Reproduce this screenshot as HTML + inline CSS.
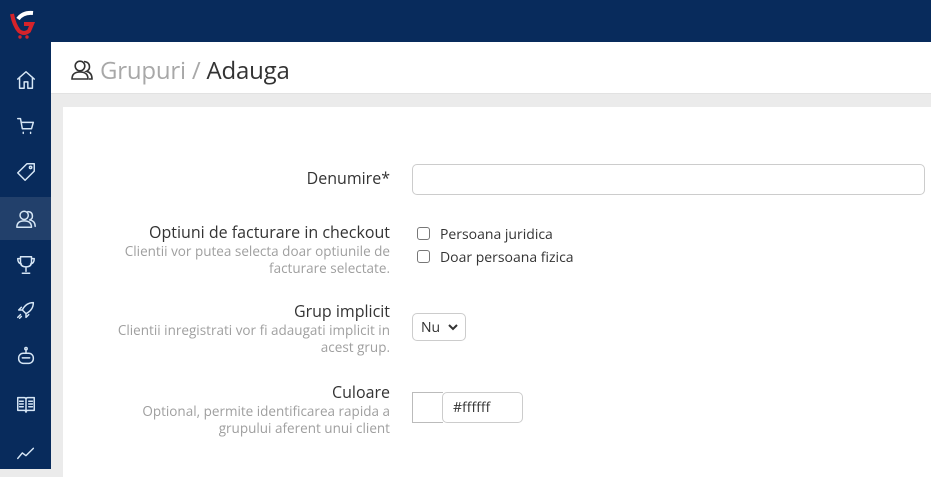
<!DOCTYPE html>
<html><head><meta charset="utf-8"><style>
*{box-sizing:border-box;margin:0;padding:0}
body{width:931px;height:469px;overflow:hidden;background:#ebebeb;font-family:"Open Sans","Liberation Sans",sans-serif;position:relative}
#top{position:absolute;left:0;top:0;width:931px;height:42px;background:#082b5c}
#side{position:absolute;left:0;top:0;width:51px;height:469px;background:#082b5c}
.ic{position:absolute;left:0;width:51px;height:43px;display:flex;align-items:center;justify-content:center}
.ic svg{width:22px;height:22px;fill:none;stroke:#d6e6f5;stroke-width:1.6;stroke-linecap:round;stroke-linejoin:round}
.act{background:#22406b}
#hdr{position:absolute;left:51px;top:42px;width:880px;height:52px;background:#fff;border-bottom:1px solid #e2e2e2}
#hdr .t{position:absolute;left:49px;top:12px;font-size:24px;color:#333;letter-spacing:-.2px}
#hdr .t span{color:#a8a8a8}
#panel{position:absolute;left:63px;top:107px;width:868px;height:370px;background:#fff}
.lbl{position:absolute;right:541px;text-align:right;font-size:16px;color:#333}
.sub{position:absolute;right:541px;text-align:right;font-size:13.5px;color:#9f9f9f;line-height:17px}
input,.box{position:absolute;border:1px solid #ccc;border-radius:5px;background:#fff}
.cb{position:absolute;width:13px;height:13px;border:1px solid #777;border-radius:3px;left:417px}
.ct{position:absolute;left:440px;font-size:14px;color:#333}
</style></head><body>
<div id="top"></div>
<div id="side">
<svg style="position:absolute;left:9px;top:9px" width="30" height="32" viewBox="0 0 30 32"><path d="M3 5 Q5 16 10 22 Q15 26 20 22 L23 15 L15 15" fill="none" stroke="#d6232a" stroke-width="4"/><path d="M9 10 Q14 3 24 4" fill="none" stroke="#fff" stroke-width="4"/><circle cx="11" cy="28" r="1.7" fill="#d6232a"/><circle cx="18" cy="28" r="1.7" fill="#d6232a"/></svg>
<div class="ic" style="top:58px"><svg viewBox="0 0 24 24"><path d="M3 11 L12 3 L21 11 M5 9 V21 H10 V14 H14 V21 H19 V9"/></svg></div>
<div class="ic" style="top:104px"><svg viewBox="0 0 24 24"><path d="M3 4 H6 L8 15 H18 L20 8 H7 M9 19 v1 M17 19 v1"/></svg></div>
<div class="ic" style="top:150px"><svg viewBox="0 0 24 24"><path d="M13 3 H21 V11 L11 21 L3 13 Z"/><circle cx="17" cy="7" r="1.3"/></svg></div>
<div class="ic act" style="top:197px"><svg viewBox="0 0 24 24"><circle cx="10" cy="8" r="4.5"/><path d="M2 21 Q2 14 10 14 Q18 14 18 21 Z M14 4 Q19 4 19 9 Q19 12 16 13 Q22 14 22 20"/></svg></div>
<div class="ic" style="top:243px"><svg viewBox="0 0 24 24"><path d="M6 3 H18 V9 Q18 14 12 14 Q6 14 6 9 Z M6 5 H3 Q3 10 7 11 M18 5 H21 Q21 10 17 11 M12 14 V19 M8 21 H16"/></svg></div>
<div class="ic" style="top:288px"><svg viewBox="0 0 24 24"><path d="M20 4 Q12 4 8 12 L12 16 Q20 12 20 4 Z M8 12 H4 L7 9 M12 16 V20 L15 17 M6 17 L3 20 M7 19 L5 21"/></svg></div>
<div class="ic" style="top:334px"><svg viewBox="0 0 24 24"><rect x="4" y="9" width="16" height="11" rx="5"/><path d="M12 5 V9 M8 14 H16"/><circle cx="12" cy="4" r="1.3"/></svg></div>
<div class="ic" style="top:382px"><svg viewBox="0 0 24 24"><path d="M3 5 H10 Q12 5 12 7 Q12 5 14 5 H21 V19 H14 Q12 19 12 21 Q12 19 10 19 H3 Z M12 7 V21 M5 9 H9 M5 12 H9 M5 15 H9 M15 9 H19 M15 12 H19 M15 15 H19"/></svg></div>
<div class="ic" style="top:430px"><svg viewBox="0 0 24 24"><path d="M3 19 L8 13 L12 16 L20 8"/></svg></div>
</div>
<div id="hdr">
<svg style="position:absolute;left:19px;top:16px" width="24" height="24" viewBox="0 0 24 24" fill="none" stroke="#333" stroke-width="1.6"><circle cx="10" cy="8" r="4.8"/><path d="M2 21 Q2 14 10 14 Q18 14 18 21 Z M14 3.5 Q19.5 4 19.5 9 Q19.5 12 16.5 13.3 Q22 14.5 22 21 H19"/></svg>
<div class="t"><span>Grupuri /</span> Adauga</div>
</div>
<div id="panel"></div>
<div class="lbl" style="top:167px">Denumire*</div>
<input style="left:412px;top:164px;width:513px;height:31px">
<div class="lbl" style="top:221px">Optiuni de facturare in checkout</div>
<div class="sub" style="top:243px">Clientii vor putea selecta doar optiunile de<br>facturare selectate.</div>
<div class="cb" style="top:227px"></div><div class="ct" style="top:225px">Persoana juridica</div>
<div class="cb" style="top:250px"></div><div class="ct" style="top:248px">Doar persoana fizica</div>
<div class="lbl" style="top:300px">Grup implicit</div>
<div class="sub" style="top:322px">Clientii inregistrati vor fi adaugati implicit in<br>acest grup.</div>
<div class="box" style="left:412px;top:313px;width:54px;height:28px"><span style="position:absolute;left:8px;top:4px;font-size:14px;color:#333">Nu</span><svg style="position:absolute;left:35px;top:10px" width="10" height="7" viewBox="0 0 10 7"><path d="M1 1 L5 5 L9 1" fill="none" stroke="#333" stroke-width="2"/></svg></div>
<div class="lbl" style="top:381px">Culoare</div>
<div class="sub" style="top:403px">Optional, permite identificarea rapida a<br>grupului aferent unui client</div>
<div style="position:absolute;left:412px;top:392px;width:31px;height:31px;border:1px solid #bbb;border-right:none;background:#fff"></div>
<div class="box" style="left:442px;top:392px;width:81px;height:31px"><span style="position:absolute;left:10px;top:5px;font-size:14px;color:#333">#ffffff</span></div>
</body></html>
